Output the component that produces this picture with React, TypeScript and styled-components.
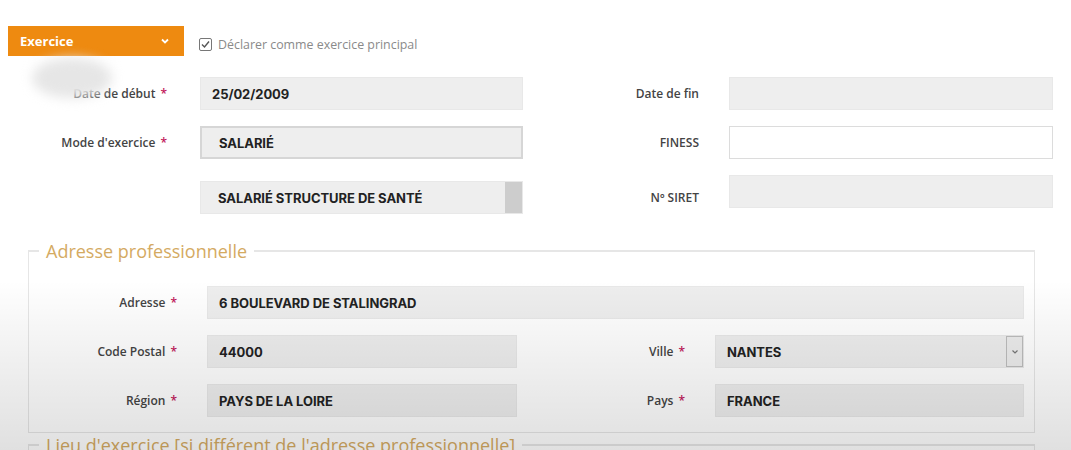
import styled, { createGlobalStyle } from "styled-components";

const GlobalStyle = createGlobalStyle`
  html, body {
    margin: 0;
    padding: 0;
    background: #ffffff;
  }
  body {
    font-family: "Open Sans", "Liberation Sans", sans-serif;
    color: #444;
  }
`;

type Field = {
  label: string;
  required?: boolean;
  value?: string;
  kind?: "input" | "select" | "white" | "scroll" | "dropdown";
};

const topRows: [Field, Field][] = [
  [
    { label: "Date de début", required: true, value: "25/02/2009" },
    { label: "Date de fin" },
  ],
  [
    { label: "Mode d'exercice", required: true, value: "SALARIÉ", kind: "select" },
    { label: "FINESS", kind: "white" },
  ],
  [
    { label: "", value: "SALARIÉ STRUCTURE DE SANTÉ", kind: "scroll" },
    { label: "Nº SIRET" },
  ],
];

export default function App() {
  return (
    <Page>
      <GlobalStyle />
      <Header>
        <ToggleButton>
          Exercice
          <svg width="10" height="8" viewBox="0 0 10 8">
            <path d="M2 2.5 L5 5.5 L8 2.5" fill="none" stroke="#fff" strokeWidth="1.8" />
          </svg>
        </ToggleButton>
        <CheckLabel>
          <CheckBox>
            <svg width="11" height="11" viewBox="0 0 11 11">
              <path d="M2 5.5 L4.5 8 L9 2.5" fill="none" stroke="#555" strokeWidth="1.4" />
            </svg>
          </CheckBox>
          Déclarer comme exercice principal
        </CheckLabel>
      </Header>

      <TopGrid>
        {topRows.map(([left, right], i) => (
          <Row key={i} $shift={i === 2 ? 6 : 0}>
            <Label>
              {left.label}
              {left.required && <Star>*</Star>}
            </Label>
            <Control
              $kind={left.kind}
              $padLeft={left.kind === "select" || left.kind === "scroll" ? 17 : 11}
            >
              {left.value}
              {left.kind === "scroll" && <ScrollThumb />}
            </Control>
            <Label $pad={30}>
              {right.label}
              {right.required && <Star>*</Star>}
            </Label>
            <Control $kind={right.kind} $offset={i === 2 ? -6 : 0} />
          </Row>
        ))}
      </TopGrid>

      <Fieldset>
        <Legend>Adresse professionnelle</Legend>
        <AddressGrid>
          <Label $pad={30}>
            Adresse<Star>*</Star>
          </Label>
          <Control $span>6 BOULEVARD DE STALINGRAD</Control>

          <Label $pad={30}>
            Code Postal<Star>*</Star>
          </Label>
          <Control>44000</Control>
          <Label $pad={30}>
            Ville<Star>*</Star>
          </Label>
          <Control $kind="dropdown">
            NANTES
            <DropButton>
              <svg width="8" height="6" viewBox="0 0 8 6">
                <path d="M1.5 1.5 L4 4 L6.5 1.5" fill="none" stroke="#777" strokeWidth="1.2" />
              </svg>
            </DropButton>
          </Control>

          <Label $pad={30}>
            Région<Star>*</Star>
          </Label>
          <Control>PAYS DE LA LOIRE</Control>
          <Label $pad={30}>
            Pays<Star>*</Star>
          </Label>
          <Control>FRANCE</Control>
        </AddressGrid>
      </Fieldset>

      <Fieldset $cut>
        <Legend>Lieu d'exercice [si différent de l'adresse professionnelle]</Legend>
      </Fieldset>

      <Smudge />
      <Shade />
    </Page>
  );
}

const Page = styled.div`
  position: relative;
  width: 1071px;
  height: 450px;
  overflow: hidden;
  padding-top: 26px;
  box-sizing: border-box;
`;

const Header = styled.div`
  display: flex;
  align-items: center;
  gap: 15px;
  padding-left: 8px;
`;

const ToggleButton = styled.div`
  width: 176px;
  height: 30px;
  box-sizing: border-box;
  background: #ee8a10;
  color: #fff;
  font-weight: 700;
  font-size: 13px;
  display: flex;
  align-items: center;
  justify-content: space-between;
  padding: 0 14px 0 12px;
`;

const CheckLabel = styled.label`
  display: flex;
  align-items: center;
  gap: 6px;
  font-size: 12.4px;
  color: #8a8a8a;
  margin-top: 6px;
`;

const CheckBox = styled.span`
  width: 11px;
  height: 11px;
  border: 1px solid #777;
  border-radius: 2px;
  display: flex;
  align-items: center;
  justify-content: center;
`;

const TopGrid = styled.div`
  display: flex;
  flex-direction: column;
  gap: 16px;
  margin-top: 21px;
  padding-left: 8px;
`;

const Row = styled.div<{ $shift: number }>`
  display: grid;
  grid-template-columns: 192px 323px 206px 324px;
  align-items: center;
  height: 33px;
  margin-top: ${(p) => p.$shift}px;
`;

const Label = styled.div<{ $pad?: number }>`
  text-align: right;
  padding-right: ${(p) => p.$pad ?? 33}px;
  font-size: 12px;
  font-weight: 600;
  color: #444;
  white-space: nowrap;
`;

const Star = styled.span`
  color: #c2185b;
  margin-left: 5px;
`;

const Control = styled.div<{
  $kind?: Field["kind"];
  $span?: boolean;
  $padLeft?: number;
  $offset?: number;
}>`
  position: relative;
  height: 33px;
  box-sizing: border-box;
  display: flex;
  align-items: center;
  padding-left: ${(p) => p.$padLeft ?? 11}px;
  grid-column: ${(p) => (p.$span ? "2 / 5" : "auto")};
  transform: translateY(${(p) => p.$offset ?? 0}px);
  background: ${(p) => (p.$kind === "white" ? "#ffffff" : "#eeeeee")};
  border: ${(p) =>
    p.$kind === "select"
      ? "2px solid #d6d6d6"
      : p.$kind === "white"
        ? "1px solid #dcdcdc"
        : "1px solid #e8e8e8"};
  font-family: Inter, "Liberation Sans", sans-serif;
  font-weight: 700;
  font-size: 13px;
  letter-spacing: -0.05px;
  color: #222;
  white-space: nowrap;
`;

const ScrollThumb = styled.span`
  position: absolute;
  right: 0;
  top: 0;
  bottom: 0;
  width: 17px;
  background: #cdcdcd;
`;

const DropButton = styled.span`
  position: absolute;
  right: 0;
  top: 0;
  bottom: 0;
  width: 17px;
  box-sizing: border-box;
  border: 1px solid #bdbdbd;
  background: #ececec;
  display: flex;
  align-items: center;
  justify-content: center;
`;

const Fieldset = styled.fieldset<{ $cut?: boolean }>`
  margin: ${(p) => (p.$cut ? "0 36px 0 28px" : "25px 36px 0 28px")};
  padding: 0 11px ${(p) => (p.$cut ? "40px" : "15px")} 0;
  border-style: solid;
  border-width: 2px 1px 1px 1px;
  border-color: #e6e6e6;
  min-width: 0;
`;

const Legend = styled.legend`
  margin-left: 10px;
  padding: 0 7px;
  font-size: 18px;
  color: #d4aa62;
  font-family: "Open Sans", "Liberation Sans", sans-serif;
`;

const AddressGrid = styled.div`
  display: grid;
  grid-template-columns: 178px 310px 198px 309px;
  grid-auto-rows: 33px;
  row-gap: 16px;
  align-items: center;
  margin-top: 23px;
`;

const Smudge = styled.div`
  position: absolute;
  left: 32px;
  top: 58px;
  width: 80px;
  height: 40px;
  border-radius: 50%;
  background: #e6e6e6;
  filter: blur(6px);
  pointer-events: none;
`;

const Shade = styled.div`
  position: absolute;
  left: 0;
  right: 0;
  top: 280px;
  bottom: 0;
  background: linear-gradient(
    to bottom,
    rgba(0, 0, 0, 0) 0%,
    rgba(0, 0, 0, 0.05) 40%,
    rgba(0, 0, 0, 0.12) 100%
  );
  pointer-events: none;
`;
